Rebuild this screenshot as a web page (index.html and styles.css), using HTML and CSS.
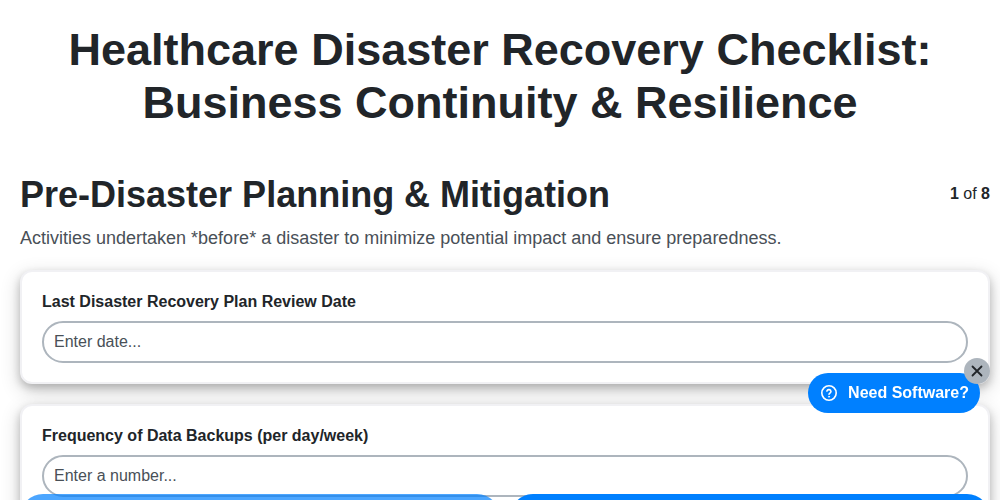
FILE: index.html
```html
<!DOCTYPE html>
<html lang="en">
<head>
<meta charset="utf-8">
<title>Healthcare Disaster Recovery Checklist</title>
<link rel="stylesheet" href="styles.css">
</head>
<body>
<main class="page">
  <h1 class="title">Healthcare Disaster Recovery Checklist: Business Continuity &amp; Resilience</h1>
  <header class="section-head">
    <h2 class="section-title">Pre-Disaster Planning &amp; Mitigation</h2>
    <div class="pager"><b>1</b> of <b>8</b></div>
  </header>
  <p class="section-desc">Activities undertaken *before* a disaster to minimize potential impact and ensure preparedness.</p>
  <section class="card">
    <label class="field-label" for="f1">Last Disaster Recovery Plan Review Date</label>
    <input class="field-input" id="f1" type="text" placeholder="Enter date...">
  </section>
  <section class="card">
    <label class="field-label" for="f2">Frequency of Data Backups (per day/week)</label>
    <input class="field-input" id="f2" type="text" placeholder="Enter a number...">
  </section>
</main>
<div class="nav-bar">
  <button class="nav-btn nav-btn-prev" type="button"></button>
  <button class="nav-btn" type="button"></button>
</div>
<div class="promo">
  <a class="promo-pill" href="#">
    <svg class="promo-icon" viewBox="0 0 16 16" width="16" height="16" fill="none" stroke="#fff" stroke-width="1.6" stroke-linecap="round"><circle cx="8" cy="8" r="7.2"/><path d="M5.9 6.1a2.1 2.1 0 0 1 4.1.4c0 1.4-2 1.6-2 2.8"/><circle cx="8" cy="11.7" r=".6" fill="#fff" stroke-width=".6"/></svg>
    <span>Need Software?</span>
  </a>
  <button class="promo-close" type="button" aria-label="Close">
    <svg viewBox="0 0 12 12" width="12" height="12" fill="none" stroke="#212529" stroke-width="1.8" stroke-linecap="round"><path d="M1.5 1.5l9 9M10.5 1.5l-9 9"/></svg>
  </button>
</div>
</body>
</html>
```
FILE: styles.css
```css
* { box-sizing: border-box; }
html, body { height: 100%; }
body {
  margin: 0;
  overflow: hidden;
  background: #fff;
  color: #212529;
  font-family: "Liberation Sans", Arial, sans-serif;
}
.page { padding: 23px 10px 0 20px; }
.title {
  margin: 0 10px 44px 0;
  font-size: 45px;
  line-height: 53px;
  font-weight: 700;
  text-align: center;
}
.section-head {
  display: flex;
  justify-content: space-between;
  align-items: flex-start;
}
.section-title {
  margin: 0;
  font-size: 36px;
  line-height: 43px;
  font-weight: 700;
}
.pager { font-size: 16px; line-height: 19px; margin-top: 11px; }
.section-desc {
  margin: 11px 0 21px;
  font-size: 18px;
  line-height: 22px;
  color: #495057;
}
.card {
  background: #fff;
  border: 2px solid #f1f1f4;
  border-radius: 12px;
  box-shadow: 0 4px 8px rgba(0,0,0,.2), 0 6px 20px rgba(0,0,0,.19);
  padding: 20px 20px 19px;
  margin-bottom: 20px;
}
.field-label {
  display: block;
  font-size: 16px;
  line-height: 19px;
  font-weight: 700;
  margin-bottom: 10px;
}
.field-input {
  display: block;
  width: 100%;
  height: 42px;
  padding: 0 10px;
  border: 2px solid #adb5bd;
  border-radius: 21px;
  background: #fff;
  font: 16px "Liberation Sans", Arial, sans-serif;
  color: #495057;
  outline: none;
}
.field-input::placeholder { color: #495057; opacity: 1; }
.nav-bar {
  position: fixed;
  left: 20px;
  right: 10px;
  bottom: -40px;
  display: flex;
  gap: 10px;
}
.nav-btn {
  flex: 1;
  height: 46px;
  border: 0;
  border-radius: 23px;
  background: #0080ff;
}
.nav-btn-prev { opacity: .7; }
.promo { position: fixed; right: 20px; bottom: 87px; }
.promo-pill {
  display: flex;
  align-items: center;
  gap: 11px;
  height: 40px;
  padding: 0 11px 0 13px;
  border-radius: 20px;
  background: #0080ff;
  color: #fff;
  font-size: 16px;
  font-weight: 700;
  text-decoration: none;
}
.promo-icon { flex: none; }
.promo-close {
  position: absolute;
  top: -15px;
  right: -10px;
  width: 26px;
  height: 26px;
  padding: 0;
  border: 0;
  border-radius: 50%;
  background: #adb5bd;
  display: flex;
  align-items: center;
  justify-content: center;
}
```
